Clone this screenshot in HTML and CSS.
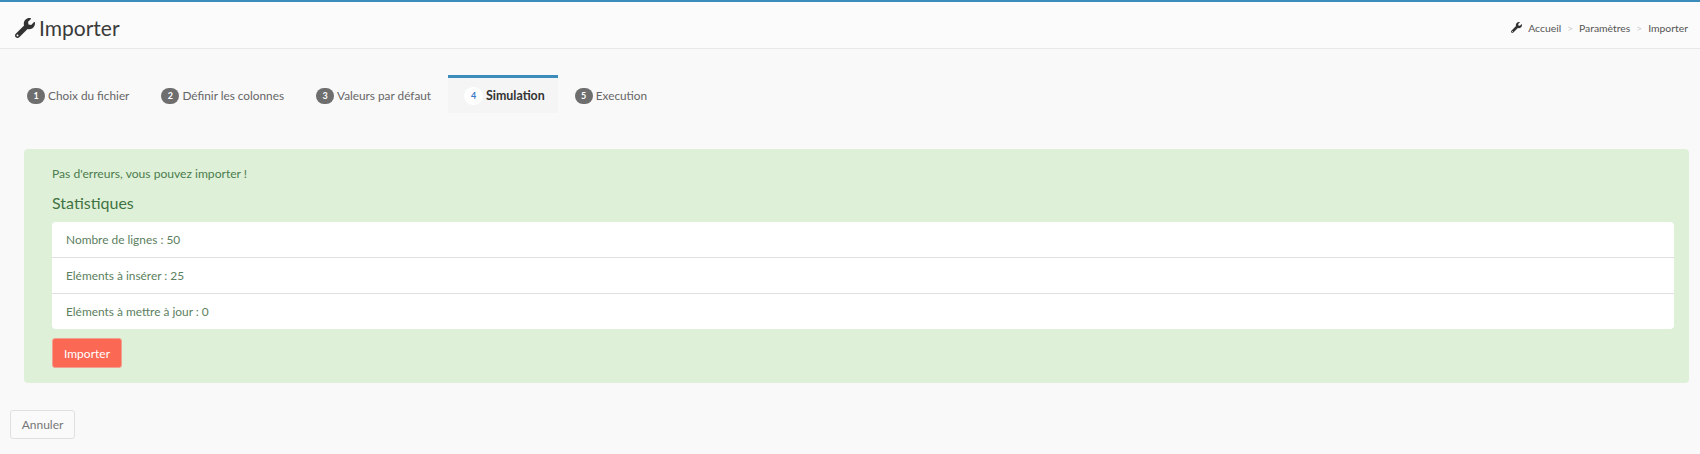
FILE: index.html
```html
<!DOCTYPE html>
<html lang="fr">
<head>
<meta charset="utf-8">
<title>Importer</title>
<link rel="stylesheet" href="styles.css">
</head>
<body>
<header class="page-header">
  <h1 class="title">
    <svg class="title-icon" viewBox="0 0 512 512"><path d="M507.73 109.1c-2.24-9.03-13.54-12.09-20.12-5.51l-74.36 74.36-67.88-11.31-11.31-67.88 74.36-74.36c6.62-6.62 3.43-17.9-5.66-20.16-47.38-11.74-99.55.91-136.58 37.93-39.64 39.64-50.55 97.1-34.05 147.2L18.74 402.76c-24.99 24.99-24.99 65.51 0 90.5 24.99 24.99 65.51 24.99 90.5 0l213.21-213.21c50.12 16.71 107.47 5.68 147.37-34.22 37.07-37.07 49.7-89.32 37.91-136.73zM64 472c-13.25 0-24-10.75-24-24 0-13.26 10.75-24 24-24s24 10.74 24 24c0 13.25-10.75 24-24 24z"/></svg>
    <span>Importer</span>
  </h1>
  <nav class="crumbs">
    <svg class="crumb-icon" viewBox="0 0 512 512"><path d="M507.73 109.1c-2.24-9.03-13.54-12.09-20.12-5.51l-74.36 74.36-67.88-11.31-11.31-67.88 74.36-74.36c6.62-6.62 3.43-17.9-5.66-20.16-47.38-11.74-99.55.91-136.58 37.93-39.64 39.64-50.55 97.1-34.05 147.2L18.74 402.76c-24.99 24.99-24.99 65.51 0 90.5 24.99 24.99 65.51 24.99 90.5 0l213.21-213.21c50.12 16.71 107.47 5.68 147.37-34.22 37.07-37.07 49.7-89.32 37.91-136.73zM64 472c-13.25 0-24-10.75-24-24 0-13.26 10.75-24 24-24s24 10.74 24 24c0 13.25-10.75 24-24 24z"/></svg>
    <span>Accueil</span><span class="sep">&gt;</span><span>Paramètres</span><span class="sep">&gt;</span><span>Importer</span>
  </nav>
</header>
<main class="content">
  <ul class="tabs">
    <li class="tab"><span class="badge">1</span>Choix du fichier</li>
    <li class="tab"><span class="badge">2</span>Définir les colonnes</li>
    <li class="tab"><span class="badge">3</span>Valeurs par défaut</li>
    <li class="tab active"><span class="badge">4</span>Simulation</li>
    <li class="tab"><span class="badge">5</span>Execution</li>
  </ul>
  <section class="alert">
    <p class="message">Pas d'erreurs, vous pouvez importer !</p>
    <h4 class="stats-title">Statistiques</h4>
    <ul class="stats">
      <li>Nombre de lignes : 50</li>
      <li>Eléments à insérer : 25</li>
      <li>Eléments à mettre à jour : 0</li>
    </ul>
    <button class="btn btn-import" type="button">Importer</button>
  </section>
  <button class="btn btn-cancel" type="button">Annuler</button>
</main>
</body>
</html>
```
FILE: styles.css
```css
* { box-sizing: border-box; }
html, body { margin: 0; height: 100%; }
body {
  background: #f9f9f9;
  color: #555;
  font-family: "Lato", "Noto Sans", sans-serif;
  font-size: 11.8px;
  overflow: hidden;
}
.page-header {
  height: 49px;
  border-top: 2px solid #3c8dbc;
  border-bottom: 1px solid #e8e8e8;
  background: #fbfbfb;
  display: flex;
  align-items: center;
  justify-content: space-between;
  padding: 5px 12px 0 15px;
}
.title {
  margin: 0;
  display: flex;
  align-items: center;
  gap: 4px;
  font-size: 21px;
  font-weight: 400;
  color: #3a3a3a;
}
.title-icon { width: 20px; height: 20px; fill: #333; }
.crumbs {
  display: flex;
  align-items: center;
  font-size: 10.4px;
  color: #555;
}
.crumb-icon { width: 11px; height: 11px; fill: #333; margin-right: 6px; }
.sep { color: #ccc; margin: 0 6px; font-size: 10px; }
.content { padding: 26px 0 0 0; }
.tabs {
  list-style: none;
  margin: 0 0 36px 12px;
  padding: 0;
  display: flex;
  height: 38px;
}
.tab {
  display: flex;
  align-items: center;
  padding: 0 15px;
  border-top: 3px solid transparent;
  color: #666;
  margin-right: 2px;
}
.badge {
  width: 18px;
  height: 16px;
  border-radius: 8px;
  background: #6e6e6e;
  color: #fff;
  font-size: 9px;
  font-weight: 700;
  display: flex;
  align-items: center;
  justify-content: center;
  margin-right: 3px;
}
.tab.active {
  border-top-color: #3c8dbc;
  background: #f5f5f5;
  color: #333;
  font-size: 12.4px;
  font-weight: 700;
  padding: 0 13px 0 16px;
  margin-right: 2px;
}
.tab.active .badge {
  background: #fff;
  color: #3c78c8;
  width: 19px;
  height: 18px;
  border-radius: 9px;
  margin-right: 3px;
}
.alert {
  margin: 0 11px 0 24px;
  height: 234px;
  padding: 17px 15px 0 28px;
  background: #dff0d8;
  border-radius: 4px;
  color: #4a7c4d;
}
.message { margin: 0; font-size: 12.1px; line-height: 16px; }
.stats-title {
  margin: 11px 0 9px;
  font-size: 16px;
  line-height: 20px;
  font-weight: 400;
  color: #3f7442;
}
.stats {
  list-style: none;
  margin: 0 0 9px;
  padding: 0;
  background: #fff;
  border-radius: 4px;
  color: #5b8060;
}
.stats li {
  height: 36px;
  padding: 0 14px;
  display: flex;
  align-items: center;
  border-top: 1px solid #e0e0e0;
  font-size: 11.9px;
}
.stats li:first-child { border-top: 0; height: 35px; }
.btn {
  display: block;
  font-family: inherit;
  font-size: 12px;
  border-radius: 3px;
  padding: 0;
  text-align: center;
}
.btn-import {
  width: 70px;
  height: 30px;
  background: #fb6853;
  border: 1px solid #f2a08f;
  color: #fff;
}
.btn-cancel {
  margin: 27px 0 0 10px;
  width: 65px;
  height: 29px;
  background: #fafafa;
  border: 1px solid #e0e0e0;
  color: #777;
}
```
